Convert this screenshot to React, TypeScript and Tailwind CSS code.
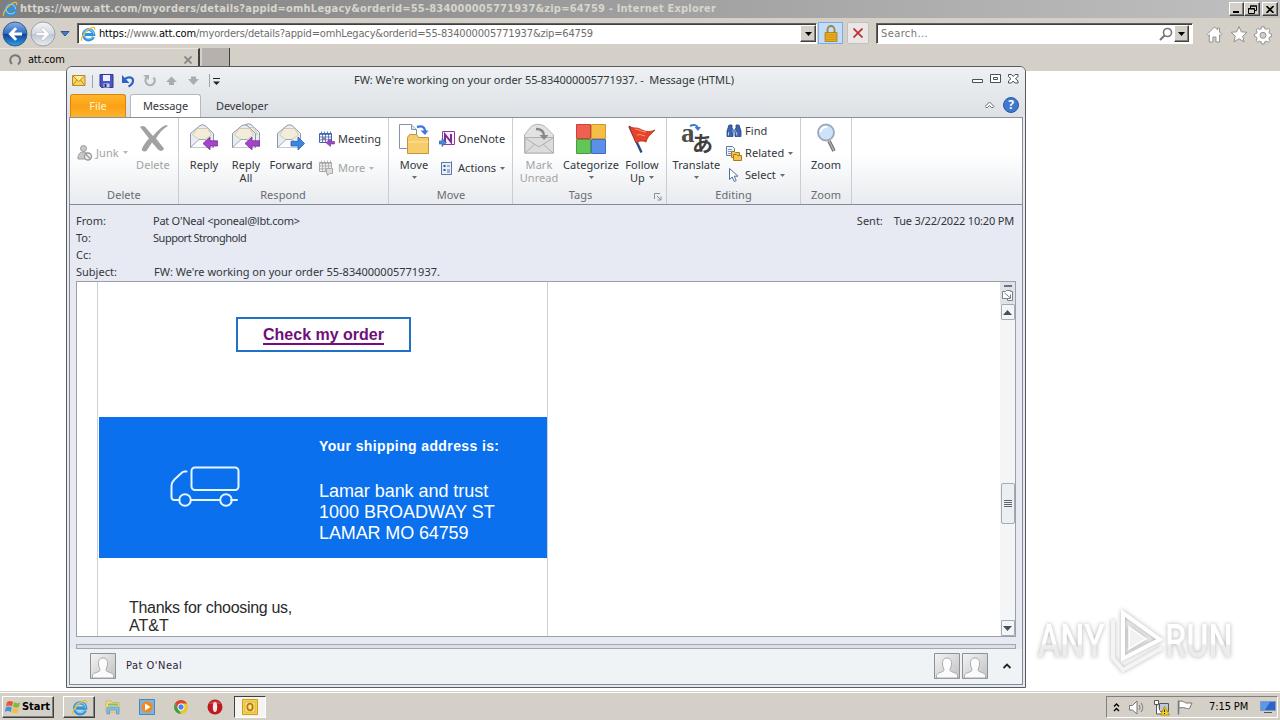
import type { ReactNode } from 'react'
import clsx from 'clsx'

const tahoma = "font-['DejaVu_Sans_Condensed','DejaVu_Sans',sans-serif] font-stretch-condensed"
const segoe = "font-['Noto_Sans',sans-serif]"
const arial = "font-['Liberation_Sans',sans-serif]"

/* ---------- icons ---------- */

function IeIcon({ size }: { size: number }) {
  return (
    <svg width={size} height={size} viewBox="0 0 16 16" fill="none" className="shrink-0">
      <path d="M13.400 10.800A5.200 5.200 0 1 1 13.800 8.600H4" stroke="#2f93dc" strokeWidth="3" />
      <path d="M12.800 10.800A4.800 4.800 0 1 1 13.600 8.400" stroke="#7fcaf6" strokeWidth="1.200" />
      <path d="M1.600 14.600C.2 12.400 5.200 4.800 10.800 2 13.600.6 15.400 1.400 14.400 4" stroke="#f2bd30" strokeWidth="1.300" />
    </svg>
  )
}

function NavCircle({ blue }: { blue?: boolean }) {
  return (
    <svg width="26" height="26" viewBox="0 0 26 26">
      <defs>
        <linearGradient id={blue ? 'navb' : 'navg'} x1="0" y1="0" x2="0" y2="1">
          <stop offset="0" stopColor={blue ? '#86b2e6' : '#f4f5f8'} />
          <stop offset="0.48" stopColor={blue ? '#2f6cc0' : '#d4d9e0'} />
          <stop offset="0.5" stopColor={blue ? '#0e3f94' : '#bcc4ce'} />
          <stop offset="1" stopColor={blue ? '#2ba3e8' : '#e9edf2'} />
        </linearGradient>
      </defs>
      <circle cx="13" cy="13" r="12" fill={blue ? 'url(#navb)' : 'url(#navg)'} stroke={blue ? '#3a5a8c' : '#9ba0a8'} />
      {blue ? (
        <path d="M20 11.6h-8l3.2-3.6-2.2-1.8L6.4 13l6.600 6.800 2.200-1.800-3.200-3.600h8z" fill="#fff" />
      ) : (
        <path d="M6 11.600h8l-3.200-3.600L13 6.200 19.600 13 13 19.800 10.800 18l3.200-3.600H6z" fill="#fff" stroke="#b0b7c0" strokeWidth="0.600" />
      )}
    </svg>
  )
}

function Tri({ color = '#6a6e74' }: { color?: string }) {
  return (
    <svg width="5" height="3" viewBox="0 0 5 3" className="shrink-0">
      <path d="M0 0h5L2.500 3z" fill={color} />
    </svg>
  )
}

function Envelope({ gray, arrow }: { gray?: boolean; arrow?: 'left' | 'right' }) {
  const line = gray ? '#b4b4b4' : '#8c98a8'
  return (
    <g>
      <path d="M2.500 10.500L12 2.500Q14.500 1 17 2.500L25.500 10.500V24.500H2.500z" fill={gray ? '#e4e4e4' : '#e9edf2'} stroke={line} />
      <path d="M4.500 12L9 5.500h10.500L23.500 12 17 16.500h-6z" fill={gray ? '#d6d6d6' : '#f3ecd8'} stroke={gray ? '#bbb' : '#c9c3b2'} strokeWidth="0.800" />
      <path d="M2.500 24.500L11 16.500h6l8.500 8" fill={gray ? '#ececec' : '#fbfcfd'} stroke={line} strokeWidth="0.800" />
      {arrow === 'left' && <path d="M29.500 17.800h-7.500v-3.800L15 20.500l7 6.300v-3.800h7.500z" fill="#a544c8" stroke="#7b2c9c" strokeWidth="0.800" />}
      {arrow === 'right' && <path d="M16 18.300h7v-4.300l6.500 6.500-6.500 6.500v-4h-7z" fill="#3d86e0" stroke="#2360b0" strokeWidth="0.800" />}
    </g>
  )
}

function Big({ children }: { children: ReactNode }) {
  return <svg width="32" height="32" viewBox="0 0 32 32" fill="none" className="overflow-visible">{children}</svg>
}

function Small({ children }: { children: ReactNode }) {
  return <svg width="16" height="16" viewBox="0 0 16 16" fill="none" className="shrink-0">{children}</svg>
}

function CalendarIcon({ gray }: { gray?: boolean }) {
  const c = gray ? '#a8a8a8' : '#3f66b4'
  return (
    <Small>
      <path d="M.5 2.500h12v9H.5z" fill={gray ? '#eee' : '#fff'} stroke={c} />
      <path d="M.5 3.500h12M3.500 2v9.500M6.500 2v9.500M9.500 2v9.500M.5 6h12M.5 8.800h12M2.500.5v2M5.500.5v2M8.500.5v2M11.500.5v2" stroke={c} strokeWidth="0.800" />
      {!gray && <path d="M4 6.500h2v2H4z" fill="#e05a3a" />}
      {gray ? (
        <path d="M7.500 8.500h6v5h-3l-2 2v-2h-1z" fill="#ddd" stroke="#aaa" />
      ) : (
        <path d="M15.500 10.500h-4V8L7 11.800l4.500 3.700V13h4z" fill="#a544c8" stroke="#7b2c9c" strokeWidth="0.600" />
      )}
    </Small>
  )
}

function Person() {
  return (
    <svg width="26" height="26" viewBox="0 0 26 26" fill="none">
      <defs>
        <linearGradient id="person" x1="0" y1="0" x2="1" y2="1">
          <stop offset="0" stopColor="#f4f4f4" />
          <stop offset="1" stopColor="#c0c1c3" />
        </linearGradient>
      </defs>
      <path d="M.5.5h25v25H.5z" fill="url(#person)" stroke="#8d9095" />
      <path d="M2.500 25v-2.500c.3-3 6-3 7.500-5 .4-1.500-1.500-3-1.500-6.500C8.300 7 10 5 13 5s4.700 2 4.500 6c0 3.500-1.900 5-1.500 6.500 1.500 2 7.200 2 7.500 5V25z" fill="#fbfbfb" stroke="#a9abae" />
    </svg>
  )
}

/* ---------- browser ---------- */

function ClassicButton({ children, className }: { children: ReactNode; className?: string }) {
  return (
    <div className={clsx('flex items-center justify-center border border-t-white border-l-white border-r-[#404040] border-b-[#404040] bg-[#d4d0c8] shadow-[inset_-1px_-1px_0_#808080]', className)}>
      {children}
    </div>
  )
}

function BrowserChrome() {
  return (
    <>
      <div className="flex h-[18px] items-center bg-linear-to-r from-[#7f7f7f] to-[#c0c0c0] pl-[2px] pr-[2px]">
        <IeIcon size={16} />
        <span className={clsx(tahoma, 'ml-[2px] flex-1 whitespace-nowrap text-[11px] leading-[18px] font-bold tracking-[0.200px] text-[#d8d5ce]')}>
          https://www.att.com/myorders/details?appid=omhLegacy&amp;orderid=55-834000005771937&amp;zip=64759 - Internet Explorer
        </span>
        <ClassicButton className="h-[14px] w-[15px]">
          <svg width="9" height="8"><path d="M1 6h6v2H1z" fill="#000" /></svg>
        </ClassicButton>
        <ClassicButton className="h-[14px] w-[16px]">
          <svg width="9" height="9" fill="none"><path d="M2.500 3V1h6v4.500H7M2 1h7M.5 3.500h6v5h-6zM0 4h7" stroke="#000" /></svg>
        </ClassicButton>
        <ClassicButton className="ml-[2px] h-[14px] w-[16px]">
          <svg width="8" height="7"><path d="M.5 0l7 7M7.500 0l-7 7" stroke="#000" strokeWidth="1.600" /></svg>
        </ClassicButton>
      </div>

      <div className="flex h-[30px] items-start bg-[#d4d0c8] pt-[3px]">
        <div className="ml-[2px] flex h-[26px] items-center gap-[2px]">
          <NavCircle blue />
          <NavCircle />
        </div>
        <svg width="10" height="26" className="ml-[4px]"><path d="M1 10.500h8L5 15z" fill="#3c7fd0" stroke="#1b3f7c" strokeWidth="0.800" /></svg>
        <div className="mt-[2px] ml-[7px] flex h-[21px] w-[740px] items-center border border-t-[#606060] border-l-[#606060] border-r-white border-b-white bg-white pl-[2px] shadow-[inset_1px_1px_0_#404040]">
          <IeIcon size={16} />
          <span className={clsx(tahoma, 'ml-[3px] flex-1 pt-px text-[11px] tracking-[-0.165px] text-[#6d6d6d]')}>
            <span className="text-black">https:</span>//www.<span className="text-black">att.com</span>/myorders/details?appid=omhLegacy&amp;orderid=55-834000005771937&amp;zip=64759
          </span>
          <ClassicButton className="h-[17px] w-[16px]"><svg width="7" height="4"><path d="M0 0h7L3.500 4z" /></svg></ClassicButton>
        </div>
        <div className="mt-px ml-px flex h-[22px] w-[25px] items-center justify-center border border-[#78aee8] bg-[#c3dcf8]">
          <svg width="14" height="17" viewBox="0 0 14 17" fill="none">
            <path d="M3.500 8V4.500a3.500 3.500 0 0 1 7 0V8" stroke="#9a8440" strokeWidth="1.800" />
            <path d="M1 7.500h12v9H1z" fill="#e9ae1e" stroke="#a8791a" strokeWidth="0.800" />
            <path d="M1 10h12M1 12.300h12M1 14.600h12" stroke="#c58b14" strokeWidth="0.700" />
          </svg>
        </div>
        <div className="mt-px ml-[4px] flex h-[22px] w-[22px] items-center justify-center rounded-[2px] border border-[#c4bfbc] bg-[#ebe7e6]">
          <svg width="10" height="10"><path d="M.5.5l9 9M9.500.5l-9 9" stroke="#b8353c" strokeWidth="1.800" /></svg>
        </div>
        <div className="mt-[2px] ml-[7px] flex h-[21px] w-[317px] items-center border border-t-[#606060] border-l-[#606060] border-r-white border-b-white bg-white pr-[3px] pl-[4px] shadow-[inset_1px_1px_0_#404040]">
          <span className={clsx(tahoma, 'flex-1 pt-px text-[11px] tracking-[0.400px] text-[#777]')}>Search...</span>
          <svg width="14" height="14" fill="none" className="mr-px"><circle cx="8.500" cy="5.500" r="4" stroke="#777" strokeWidth="1.600" /><path d="M5.500 8.500L1 13" stroke="#777" strokeWidth="2" /></svg>
          <ClassicButton className="h-[17px] w-[15px]"><svg width="7" height="4"><path d="M0 0h7L3.500 4z" /></svg></ClassicButton>
        </div>
        <svg width="68" height="20" viewBox="0 0 68 20" fill="#fff" stroke="#929292" className="mt-[4px] ml-[13px]">
          <path d="M1 9.500L8.500 2l3 2.800V3h2v4l2.300 2.500-1.200 1.200-1-1V17h-3.700v-5h-3v5H3.300V9.800L2.200 10.700z" />
          <path d="M33 1.500l2.300 5.300 5.700.5-4.300 3.800 1.300 5.700L33 13.800 28 16.800l1.300-5.700L25 7.300l5.700-.5z" />
          <path d="M55.800 1.700h2.400l.5 2 1.600.7 1.900-1 1.700 1.700-1 1.900.7 1.600 2 .5v2.400l-2 .5-.7 1.600 1 1.900-1.700 1.700-1.900-1-1.600.7-.5 2h-2.400l-.5-2-1.600-.7-1.900 1-1.700-1.700 1-1.900-.7-1.600-2-.5V9.100l2-.5.7-1.600-1-1.900 1.700-1.700 1.900 1 1.600-.7z" />
          <circle cx="57" cy="10.300" r="3" fill="#d4d0c8" />
        </svg>
      </div>

      <div className="flex h-[23px] bg-[#d4d0c8]">
        <div className="flex w-[200px] items-center border-t border-r-2 border-t-[#e8e5e0] border-r-[#404040] pl-[8px]">
          <svg width="14" height="14" fill="none"><path d="M4 11a5 5 0 1 1 6 .3" stroke="#777" strokeWidth="2" /></svg>
          <span className={clsx(tahoma, 'ml-[6px] flex-1 pt-px text-[11px] tracking-[-0.220px] text-black')}>att.com</span>
          <svg width="8" height="8" className="mr-[6px]"><path d="M.5.5l7 7M7.500.5l-7 7" stroke="#858585" strokeWidth="1.800" /></svg>
        </div>
        <div className="ml-[2px] h-[19px] w-[28px] border-r border-b border-r-[#404040] border-b-[#e4e1dc] bg-[#b6b1ac]" />
      </div>
    </>
  )
}

/* ---------- message window ---------- */

function TitleBar() {
  return (
    <div className="flex h-[27px] items-center pt-px pl-[5px]">
      <Small>
        <path d="M.5 2.500h12.500v10H.5z" fill="#f8d560" stroke="#b98a24" />
        <path d="M1 3l5.800 5.500L12.500 3M1 12l4-5M12.500 12l-4-5" stroke="#b98a24" fill="#fff3b8" fillOpacity="0.700" />
      </Small>
      <div className="ml-[4px] h-[13px] w-px bg-[#9ea3a9]" />
      <svg width="135" height="16" viewBox="0 0 135 16" fill="none" className="ml-[6px]">
        <path d="M1 1.500h13v13H2.500L1 13z" fill="#4a56c4" stroke="#2f3790" />
        <path d="M4 2h7v6H4z" fill="#eef1fb" />
        <path d="M4.500 10.500h6v4h-6z" fill="#c8cdea" />
        <path d="M5.500 11h2v3h-2z" fill="#222a70" />
        <path d="M26 6c4-3 8-1.500 8 1.500 0 3.500-2.500 5-4.500 6" stroke="#2f62c8" strokeWidth="2.200" />
        <path d="M23 2v8h7.500z" fill="#2f62c8" />
        <g stroke="#adb0b4" strokeWidth="2.300"><path d="M48 4.200a4.600 4.600 0 1 0 6.500.3" /></g>
        <path d="M44 2h6v5z" fill="#adb0b4" />
        <path d="M67 9l5.500-5.500L78 9h-3v3h-5V9zM89 6h3V3.500h5V6h3l-5.500 6z" fill="#a9adb3" />
        <path d="M110.500 1v13" stroke="#9ea3a9" />
        <path d="M114 5.500h7" stroke="#222" />
        <path d="M114 8.500h7l-3.500 3.500z" fill="#222" />
      </svg>
      <span className={clsx(segoe, 'ml-[120px] flex-1 pb-[2px] whitespace-pre text-[11px] tracking-[-0.050px] text-[#33363b]')}>
        FW: We&apos;re working on your order 55-834000005771937. -  Message (HTML)
      </span>
      <svg width="50" height="13" viewBox="0 0 50 13" fill="#fff" stroke="#4b5058" className="mr-[4px] mb-[3px]">
        <path d="M1.500 6.500h10v3h-10zM19.500 1.500h10v8h-10z" />
        <path d="M22.500 4.500h4v2h-4z" />
        <path d="M37.500 1.500h3l1.700 2 1.800-2h3v2L44.500 5.700 47 8v2h-3l-1.800-2-1.700 2h-3V8L40 5.700 37.500 3.500z" />
      </svg>
    </div>
  )
}

function RibbonTabs() {
  return (
    <div className="flex h-[23px] items-end pl-[3px]">
      <div className={clsx(segoe, 'flex h-[23px] w-[56px] items-center justify-center rounded-t-[3px] border border-b-0 border-[#d88508] bg-linear-to-b from-[#ffb52c] via-[#fba114] to-[#fdb42e] text-[11px] text-[#fff3cf]')}>File</div>
      <div className={clsx(segoe, '-mb-px ml-[4px] flex h-[24px] w-[71px] items-center justify-center rounded-t-[3px] border border-b-0 border-[#b5b9be] bg-white text-[11px] tracking-[-0.100px] text-[#33363b]')}>Message</div>
      <div className={clsx(segoe, 'ml-[15px] flex h-[23px] flex-1 items-center pt-px text-[11px] tracking-[-0.080px] text-[#33363b]')}>Developer</div>
      <svg width="34" height="18" viewBox="0 0 34 18" className="mr-[6px] mb-[3px]">
        <path d="M0 10.500L4.500 6l4.500 4.500L8 11.500H6.500l-2-2-2 2H1z" fill="#fff" stroke="#555a62" strokeWidth="0.900" />
        <circle cx="26" cy="9" r="7.500" fill="#3f78cc" stroke="#2a5aa8" />
        <text x="26" y="13.300" textAnchor="middle" fontSize="12" fontWeight="700" fill="#fff" fontFamily="Noto Sans">?</text>
      </svg>
    </div>
  )
}

function Group({ label, className, labelClass, children }: { label: string; className: string; labelClass?: string; children: ReactNode }) {
  return (
    <div className={clsx('flex shrink-0 flex-col border-r border-[#c9ced4]', className)}>
      <div className="flex h-[69px]">{children}</div>
      <div className={clsx('text-center leading-[15px] text-[#686c72]', labelClass)}>{label}</div>
    </div>
  )
}

function BigButton({ className, icon, lines, arrow, inlineArrow, disabled }: {
  className: string
  icon: ReactNode
  lines: string[]
  arrow?: boolean
  inlineArrow?: boolean
  disabled?: boolean
}) {
  return (
    <div className={clsx('flex shrink-0 flex-col items-center pt-[5px]', className, disabled && 'text-[#a3a3a3]')}>
      {icon}
      <div className="mt-[3px] flex flex-col items-center leading-[13px] whitespace-nowrap">
        {lines.map((l, i) => (
          <div key={l} className="flex items-center gap-[4px]">
            {l}
            {inlineArrow && i === lines.length - 1 && <Tri />}
          </div>
        ))}
      </div>
      {arrow && <div className="mt-[5px]"><Tri /></div>}
    </div>
  )
}

function SmallButton({ icon, label, arrow, disabled }: { icon: ReactNode; label: string; arrow?: boolean; disabled?: boolean }) {
  return (
    <div className={clsx('flex h-[16px] items-center gap-[3px] leading-[16px] whitespace-nowrap', disabled && 'text-[#a3a3a3]')}>
      {icon}
      {label}
      {arrow && <span className="ml-px"><Tri color={disabled ? '#b5b5b5' : '#6a6e74'} /></span>}
    </div>
  )
}

function Ribbon() {
  return (
    <div className={clsx(segoe, 'mx-[2px] flex h-[87px] border border-b-0 border-[#8b9097] bg-linear-to-b from-white from-40% to-[#e8ebef] text-[11px] tracking-[0.050px] text-[#33363b]')}>
      <Group label="Delete" className="w-[109px]">
        <div className="flex w-[60px] items-center pl-[7px]">
          <SmallButton
            disabled
            arrow
            label="Junk"
            icon={
              <Small>
                <circle cx="6.500" cy="3.500" r="3" fill="#c8c8c8" stroke="#9c9c9c" />
                <path d="M1 13c0-4 2-6 5.500-6 2.500 0 4 1 4.500 3v4H1z" fill="#c8c8c8" stroke="#9c9c9c" />
                <circle cx="11" cy="11.500" r="3.500" fill="#eee" stroke="#999" strokeWidth="1.300" />
                <path d="M8.500 9l5 5" stroke="#999" strokeWidth="1.300" />
              </Small>
            }
          />
        </div>
        <BigButton
          className="w-[46px]"
          disabled
          lines={['Delete']}
          icon={<Big><path d="M3 4c3-2 5-1 7 2l6 7c4-5 8-9 13-11 2 0 2 1 1 1.500-5 3-8 7-11 12 3 4 6 7 8 10-1 3-4 3-6 1l-6-7c-2 3-4 6-5 8-2 2-6 1-5-2 2-4 4-7 7-10z" fill="#a2a2a2" /></Big>}
        />
      </Group>

      <Group label="Respond" className="w-[210px] pl-[4px]" labelClass="pr-[5px]">
        <BigButton className="w-[42px]" lines={['Reply']} icon={<Big><Envelope arrow="left" /></Big>} />
        <BigButton className="w-[42px]" lines={['Reply', 'All']} icon={<Big><g transform="translate(4 -1)"><Envelope /></g><Envelope arrow="left" /></Big>} />
        <BigButton className="w-[48px]" lines={['Forward']} icon={<Big><Envelope arrow="right" /></Big>} />
        <div className="ml-[4px] flex flex-col gap-[13px] pt-[13px]">
          <SmallButton label="Meeting" icon={<CalendarIcon />} />
          <SmallButton label="More" disabled arrow icon={<CalendarIcon gray />} />
        </div>
      </Group>

      <Group label="Move" className="w-[124px] pl-[4px]" labelClass="pr-[3px]">
        <BigButton
          className="w-[42px]"
          arrow
          lines={['Move']}
          icon={
            <Big>
              <path d="M1.500 1.500h12l5 5v19h-17z" fill="#fff" stroke="#8293b0" />
              <path d="M13.500 1.500v5h5" fill="#dde5f3" stroke="#8293b0" />
              <path d="M19 4c6-2 8 1 8 4" stroke="#3e78d8" strokeWidth="2.400" />
              <path d="M22.500 7.500h8L27 12z" fill="#3e78d8" />
              <path d="M9.500 14.500l2-3h7l2 3h10v16h-21z" fill="#f5cd6a" stroke="#c39537" />
              <path d="M10 19h20.500" stroke="#fbe5a8" />
            </Big>
          }
        />
        <div className="ml-[4px] flex flex-col gap-[13px] pt-[13px]">
          <SmallButton
            label="OneNote"
            icon={
              <Small>
                <path d="M3.500.5h12v13h-12z" fill="#f8f0fa" stroke="#8c3f9e" />
                <path d="M6 11V3.500L12 11V3" stroke="#7b2a90" strokeWidth="2" />
                <path d="M0 10h3V7.500l4.500 4-4.500 4V13H0z" fill="#4b86dc" stroke="#2a5aa8" strokeWidth="0.600" />
              </Small>
            }
          />
          <SmallButton
            label="Actions"
            arrow
            icon={
              <Small>
                <path d="M2.500 2.500h9l1-1v13h-10z" fill="#e8eef8" stroke="#5b77a8" />
                <path d="M4.500 5h2v2h-2zM4.500 9h2v2h-2z" fill="#34599c" />
                <path d="M8 6h3M8 10h3M8 12h3" stroke="#5b77a8" />
              </Small>
            }
          />
        </div>
      </Group>

      <Group label="Tags" className="relative w-[154px] pl-[2px]" labelClass="pr-[20px]">
        <BigButton
          className="w-[48px]"
          disabled
          lines={['Mark', 'Unread']}
          icon={
            <Big>
              <path d="M1.500 12L8 3.500Q15-1 22 3.500L30.500 12v18h-29z" fill="#e2e2e2" stroke="#b4b4b4" />
              <path d="M2 14.500h28.500v15.500H2z" fill="#dcdcdc" stroke="#b0b0b0" />
              <path d="M2 15l14 9 14-9M2 30l10-9M30 30l-10-9" stroke="#b0b0b0" />
              <path d="M13 6c6 0 8 3 8 7" stroke="#888" strokeWidth="2.400" />
              <path d="M16.500 12h9L21 17z" fill="#888" />
            </Big>
          }
        />
        <BigButton
          className="w-[56px]"
          arrow
          lines={['Categorize']}
          icon={
            <Big>
              <path d="M1.500 1.500h14v14h-14z" fill="#f06052" stroke="#cc4438" />
              <path d="M16.500 1.500h14v14h-14z" fill="#f5bf46" stroke="#d09a28" />
              <path d="M1.500 16.500h14v14h-14z" fill="#63c556" stroke="#44a038" />
              <path d="M16.500 16.500h14v14h-14z" fill="#5c90e8" stroke="#3f6cc4" />
            </Big>
          }
        />
        <BigButton
          className="w-[46px]"
          inlineArrow
          lines={['Follow', 'Up']}
          icon={
            <Big>
              <path d="M3.500 3.500l12 26" stroke="#2d4a86" strokeWidth="2.400" />
              <path d="M3 3c4 3 7 1 11 3s8 4 15 1l-6 6c-1 1-2 3-3 6-4-2-7-1-10 1z" fill="#e8432a" stroke="#b02c18" strokeWidth="0.800" />
              <path d="M9 6c4 0 6 3 11 3M11 12c3-1 5 0 8 1" stroke="#ff9a78" />
            </Big>
          }
        />
        <svg width="8" height="8" fill="none" className="absolute right-[4px] bottom-[3px]"><path d="M.5 6V.5H6M3 3l3.500 3.500M7 3.500V7H3.500" stroke="#8a8f96" /></svg>
      </Group>

      <Group label="Editing" className="w-[134px] pl-[5px]" labelClass="pr-[5px]">
        <BigButton
          className="w-[49px]"
          arrow
          lines={['Translate']}
          icon={
            <Big>
              <text x="0" y="19" fontSize="27" fontWeight="700" fill="#4e4e4e" fontFamily="Liberation Serif">a</text>
              <text x="11" y="28" fontSize="21" fontWeight="700" fill="#3f3f3f" fontFamily="Noto Sans CJK JP">あ</text>
              <path d="M9 3c4-2 7-1 8 2" stroke="#3e78d8" strokeWidth="2" />
              <path d="M13.500 4h6.500l-3 4z" fill="#3e78d8" />
            </Big>
          }
        />
        <div className="ml-[5px] flex flex-col gap-[6px] pt-[5px]">
          <SmallButton
            label="Find"
            icon={
              <Small>
                <path d="M3 2h3v3l1 1v7.500H1V8zM10 2h3l2 6v5.500H9V6l1-1z" fill="#3d62ae" stroke="#274580" strokeWidth="0.800" />
                <path d="M6 6.500h4v3H6z" fill="#6d8cc8" />
                <path d="M2.500 9v3.500M10.700 9v3.500" stroke="#b8cbee" />
              </Small>
            }
          />
          <SmallButton
            label="Related"
            arrow
            icon={
              <Small>
                <path d="M.5 1.500h6l2 2v7h-8z" fill="#eef3fb" stroke="#5f7cab" />
                <path d="M2 4.500h4M2 6.500h5M2 8.500h5" stroke="#7f97c0" />
                <path d="M5.500 6.500h3l1 1h4v5h-8z" fill="#f5c552" stroke="#a8781c" />
                <path d="M7.500 9.500h3l1 1h4v5h-8z" fill="#f5c552" stroke="#a8781c" />
              </Small>
            }
          />
          <SmallButton
            label="Select"
            arrow
            icon={<Small><path d="M3.500 1.500v11l2.700-2.500 2 4.500 2-1-2-4.300H12z" fill="#fff" stroke="#51709f" /></Small>}
          />
        </div>
      </Group>

      <Group label="Zoom" className="w-[51px]">
        <BigButton
          className="w-[50px]"
          lines={['Zoom']}
          icon={
            <Big>
              <path d="M19 18l5 10" stroke="#6d6d6d" strokeWidth="3.600" />
              <path d="M19 18l5 10" stroke="#b8b8b8" strokeWidth="1.400" />
              <circle cx="16" cy="9.500" r="8" fill="#cfe3f8" stroke="#9aa8ba" strokeWidth="1.800" />
              <path d="M10.500 9a5.500 5.500 0 0 1 7-5" stroke="#fff" strokeWidth="2" />
            </Big>
          }
        />
      </Group>
    </div>
  )
}

const fields = [
  { name: 'From:', value: "Pat O'Neal <poneal@lbt.com>", spacing: 'tracking-[-0.260px]' },
  { name: 'To:', value: 'Support Stronghold', spacing: 'tracking-[-0.480px]' },
  { name: 'Cc:', value: '', spacing: '' },
  { name: 'Subject:', value: "FW: We're working on your order 55-834000005771937.", spacing: 'pl-px' },
]

function MessageHeader() {
  return (
    <div className={clsx(segoe, 'flex h-[76px] justify-between pt-[7px] pr-[8px] pl-[6px] text-[11px] text-[#33363b]')}>
      <div>
        {fields.map((f) => (
          <div key={f.name} className="flex h-[17px] items-center leading-[17px]">
            <span className="w-[77px]">{f.name}</span>
            <span className={f.spacing}>{f.value}</span>
          </div>
        ))}
      </div>
      <div className="flex gap-[11px] leading-[17px]">
        <span>Sent:</span>
        <span className="tracking-[-0.180px]">Tue 3/22/2022 10:20 PM</span>
      </div>
    </div>
  )
}

function ScrollButton({ up }: { up?: boolean }) {
  return (
    <div className="flex h-[16px] w-[14px] items-center justify-center rounded-[1px] border border-[#a5abb3] bg-[#f3f5f8]">
      <svg width="9" height="5"><path d={up ? 'M0 5L4.500 0 9 5z' : 'M0 0h9L4.500 5z'} fill="#4a4f5a" /></svg>
    </div>
  )
}

function MessageBody() {
  return (
    <div className={clsx(arial, 'mx-[6px] flex h-[356px] border border-[#9a9fa8] bg-white')}>
      <div className="ml-[20px] flex w-[451px] flex-col border-x border-[#cfd1d6]">
        <div className="mt-[35px] ml-[138px] flex h-[35px] w-[175px] items-center justify-center border-2 border-[#1f72c8]">
          <a className="mt-px border-b-2 border-[#7a0a80] text-[16px] leading-[17px] font-bold text-[#6f0f78]">Check my order</a>
        </div>
        <div className="mt-[65px] ml-px flex h-[141px] bg-[#0a70ee] text-white">
          <div className="flex w-[220px] items-center pl-[71px]">
            <svg width="70" height="42" viewBox="0 0 70 42" fill="none" stroke="#e6f6ff" strokeWidth="2" strokeLinecap="round" className="mb-px">
              <rect x="21.500" y="1.500" width="47" height="22.500" rx="3.500" />
              <path d="M16.500 5.500h-2c-1 0-2 .5-3 1.500l-7 6.500c-2 2-3 3.500-3 6V31c0 2 .8 3 3 3h5M21 34h28M61 34h6" />
              <circle cx="15" cy="34" r="5.800" />
              <circle cx="56" cy="34" r="5.800" />
            </svg>
          </div>
          <div className="flex flex-col">
            <div className="mt-[20px] text-[14px] leading-[18px] font-bold tracking-[0.380px] whitespace-nowrap">Your shipping address is:</div>
            <div className="mt-[26px] text-[18px] leading-[21px] whitespace-nowrap">
              <div className="tracking-[-0.050px]">Lamar bank and trust</div>
              <div>1000 BROADWAY ST</div>
              <div className="tracking-[-0.120px]">LAMAR MO 64759</div>
            </div>
          </div>
        </div>
        <div className="mt-[41px] ml-[31px] text-[16px] leading-[18px] text-[#2a2a2a]">
          <div className="tracking-[-0.300px]">Thanks for choosing us,</div>
          <div>AT&amp;T</div>
        </div>
      </div>
      <div className="ml-auto flex w-[15px] flex-col items-center bg-[#f4f5f7]">
        <div className="flex h-[22px] w-full flex-col items-center bg-[#dfe2e8]">
          <div className="mt-[3px] h-[2px] w-[8px] bg-[#6d727b]" />
          <svg width="13" height="13" fill="none" className="mt-[2px]"><path d="M1.500 2.500h3l1-1h4v1h2v9h-5v-2h-5z" fill="#fff" stroke="#7a7f88" /><path d="M3.500 4l6 5M9.500 5.500v4h-4" stroke="#7a7f88" /></svg>
        </div>
        <ScrollButton up />
        <div className="mt-[163px] flex h-[41px] w-[14px] flex-col items-center justify-center gap-px rounded-[2px] border border-[#a5abb3] bg-[#eceef2]">
          <div className="h-px w-[8px] bg-[#5f646d]" />
          <div className="h-px w-[8px] bg-[#5f646d]" />
          <div className="h-px w-[8px] bg-[#5f646d]" />
          <div className="h-px w-[8px] bg-[#5f646d]" />
        </div>
        <div className="mt-auto"><ScrollButton /></div>
      </div>
    </div>
  )
}

function PeoplePane() {
  return (
    <>
      <div className="mx-[6px] mt-[7px] h-[5px] border border-[#a3a8b0] bg-[#dde0e6]" />
      <div className="flex flex-1 items-center bg-[#f0f3f6] pb-px pl-[20px]">
        <Person />
        <span className={clsx(tahoma, 'ml-[10px] flex-1 text-[11px] tracking-[0.500px] text-[#2c1c38]')}>Pat O&apos;Neal</span>
        <Person />
        <div className="ml-[2px]"><Person /></div>
        <svg width="8" height="6" fill="none" className="mr-[11px] ml-[15px]"><path d="M.5 5L4 1.500 7.500 5" stroke="#222" strokeWidth="1.800" /></svg>
      </div>
    </>
  )
}

function MessageWindow() {
  return (
    <div className="absolute top-[66px] left-[66px] flex h-[622px] w-[960px] flex-col rounded-t-[6px] border border-[#575c63] bg-[#e6e9f0]">
      <div className="rounded-t-[5px] bg-linear-to-b from-[#eef0f3] to-[#dde1e5]">
        <TitleBar />
        <RibbonTabs />
      </div>
      <Ribbon />
      <div className="mx-[2px] mb-[2px] flex flex-1 flex-col border-x border-b border-[#858a92] bg-[#e7eaf2]">
        <div className="h-px bg-[#858a92]" />
        <MessageHeader />
        <MessageBody />
        <PeoplePane />
      </div>
    </div>
  )
}

/* ---------- desktop ---------- */

const markText = "scale-x-[0.740] bg-linear-to-b from-white from-55% to-[#ececec] to-60% bg-clip-text font-['Roboto',sans-serif] text-[46px] leading-none font-medium text-transparent"

function Watermark() {
  return (
    <div className="absolute top-[606px] left-[1036px] flex h-[70px] w-[204px] items-center drop-shadow-[0_0_2px_rgba(0,0,0,0.3)]">
      <div className="flex w-[70px] justify-center">
        <span className={markText}>ANY</span>
      </div>
      <svg width="60" height="66" viewBox="0 0 60 66" fill="none" stroke="#fff" strokeWidth="4">
        <path d="M17 5v45.500L54 31.500z" fill="#000" fillOpacity="0.050" />
        <path d="M7 12v38l10 12 39-22" stroke="#f4f4f4" />
        <path d="M23 19v22l17-10z" fill="#f2f2f2" strokeWidth="1.500" />
      </svg>
      <div className="flex w-[66px] justify-center">
        <span className={markText}>RUN</span>
      </div>
    </div>
  )
}

function Taskbar() {
  return (
    <div className="flex h-[28px] items-start border-t border-white bg-[#d4d0c8] pt-[3px] shadow-[0_-1px_0_#d4d0c8]">
      <ClassicButton className="ml-[2px] h-[22px] w-[52px] gap-px pr-px">
        <svg width="16" height="16" viewBox="0 0 16 16">
          <path d="M2 3c2-1.500 4-1.500 6 0L7 7.500c-2-1.500-4-1.500-6 0z" fill="#e8582c" />
          <path d="M9 3c2 1.500 4 1.500 6 .2L14 8c-2 1.200-4 1-6-.3z" fill="#86b83c" />
          <path d="M.8 8.500c2-1.500 4-1.500 6 0l-1 4.500c-2-1.500-4-1.500-6 0z" fill="#4a90dc" />
          <path d="M7.800 8.800c2 1.300 4 1.500 6 .2l-1 4.500c-2 1.200-4 1-6-.2z" fill="#f4c030" />
        </svg>
        <span className={clsx(tahoma, 'pt-px text-[11px] font-bold text-black')}>Start</span>
      </ClassicButton>
      <ClassicButton className="ml-[9px] h-[22px] w-[32px]"><IeIcon size={17} /></ClassicButton>
      <div className="ml-[10px] flex h-[22px] items-center gap-[18px]">
        <svg width="16" height="16" viewBox="0 0 16 16">
          <path d="M1 2h5l1 1.500h7V13H1z" fill="#f3dc88" stroke="#d0ae4c" strokeWidth="0.800" />
          <path d="M3 4.500h10v2H3z" fill="#7ec06a" />
          <path d="M2 15V9.500c0-1 .5-1.500 1.500-1.500h9c1 0 1.500.5 1.500 1.500V15h-2.500v-4h-7v4z" fill="#7fbfee" stroke="#4d94cc" strokeWidth="0.700" />
        </svg>
        <svg width="16" height="16" viewBox="0 0 16 16">
          <path d="M.5.5h15v15H.5z" fill="#7cb4e4" stroke="#4c86bc" />
          <circle cx="8" cy="8" r="5.800" fill="#f08a1c" />
          <path d="M6 4.500v7L11.500 8z" fill="#fff" />
        </svg>
        <svg width="16" height="16" viewBox="0 0 16 16">
          <circle cx="8" cy="8" r="7" fill="#e8c62c" />
          <path d="M1.900 4.600L5 9.800 8 15A7 7 0 0 1 1.900 4.600z" fill="#3aa050" />
          <path d="M1.900 4.600A7 7 0 0 1 14.100 4.600H8L5 9.700z" fill="#dc4432" />
          <circle cx="8" cy="8" r="3.200" fill="#4484e8" stroke="#fff" />
        </svg>
        <svg width="16" height="16" viewBox="0 0 16 16">
          <circle cx="8" cy="8" r="7.500" fill="#c01820" />
          <path d="M2 5a7 6 0 0 1 12 0z" fill="#e8686a" fillOpacity="0.500" />
          <ellipse cx="8" cy="8" rx="2.200" ry="5" fill="#f4eaea" />
        </svg>
      </div>
      <div className="ml-[11px] flex h-[22px] w-[32px] items-center justify-center border border-t-[#404040] border-l-[#404040] border-r-white border-b-white bg-[#f6f4f1]">
        <svg width="16" height="16" viewBox="0 0 16 16" fill="none">
          <path d="M.5.5h15v15H.5z" fill="#f6cf52" stroke="#d09c1c" />
          <path d="M3 3h10v10H3z" fill="#fbe698" stroke="#dcae34" strokeWidth="0.800" />
          <ellipse cx="8" cy="8" rx="2.700" ry="3.300" stroke="#b87c08" strokeWidth="1.800" />
        </svg>
      </div>
      <div className="mr-[2px] ml-auto flex h-[22px] w-[172px] items-center border border-t-[#808080] border-l-[#808080] border-r-white border-b-white pl-[6px]">
        <svg width="7" height="10" fill="none"><path d="M1 4.500l2.500-2.500L6 4.500M1 9l2.500-2.500L6 9" stroke="#000" strokeWidth="1.400" /></svg>
        <svg width="66" height="17" viewBox="0 0 66 17" fill="none" className="ml-[8px]">
          <path d="M1.500 6.500h3L9 2v13l-4.500-4h-3z" fill="#fff" stroke="#777" />
          <path d="M11 6c1.200 1.500 1.200 3.500 0 5M13 4c2.200 2.500 2.200 6.500 0 9" stroke="#777" />
          <path d="M31.500 4.500h9v8h-9z" fill="#bcc8d4" stroke="#555" />
          <path d="M26.500 1.500h4v4h-4zM28.500 5.500V15h5" fill="#fff" stroke="#555" />
          <path d="M36.500 7.500l5 8.500h-9z" fill="#fcd116" stroke="#a88408" strokeWidth="0.800" />
          <path d="M36.500 10.500v2.500M36.500 14v1" stroke="#222" />
          <path d="M50.500 1.500v14" stroke="#777" strokeWidth="1.500" />
          <path d="M51 2.500c3-1.500 5 1 7 1.500h6l-2.500 5.500c-3 1-5-2-10.500-.5z" fill="#fff" stroke="#777" />
        </svg>
        <span className={clsx(tahoma, 'ml-[15px] flex-1 pt-px whitespace-nowrap text-[11px] tracking-[-0.100px] text-black')}>7:15 PM</span>
        <svg width="16" height="14" viewBox="0 0 16 14" className="mr-px">
          <path d="M.5 1.500h15v9H.5z" fill="#2a66c8" stroke="#7b9ac8" />
          <path d="M1 2h9L5 10H1z" fill="#5c98ea" />
          <path d="M4 12.500h8" stroke="#555" />
        </svg>
      </div>
    </div>
  )
}

export default function App() {
  return (
    <div className="relative flex h-[720px] w-[1280px] flex-col overflow-hidden bg-white">
      <BrowserChrome />
      <div className="flex-1" />
      <Taskbar />
      <MessageWindow />
      <Watermark />
    </div>
  )
}
